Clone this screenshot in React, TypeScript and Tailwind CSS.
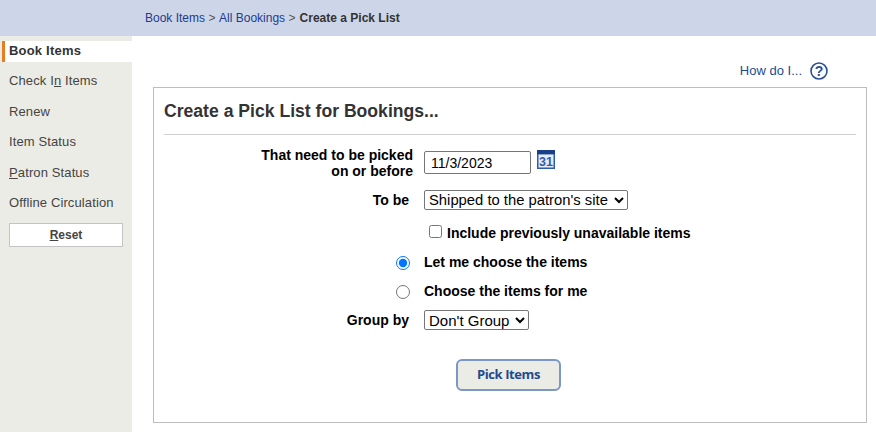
import React from "react";

const font = { fontFamily: '"Liberation Sans", Arial, sans-serif' };

function NavItem({ children, active }: { children: React.ReactNode; active?: boolean }) {
  return (
    <div className={active
      ? "h-[21px] ml-[2px] pl-[4px] border-l-[3px] border-[#e87c1e] bg-white flex items-center text-[13px] font-bold tracking-[0.2px] text-[#333] leading-none mb-[7px]"
      : "h-[23px] pl-[9px] flex items-center text-[13px] tracking-[0.12px] text-[#444] leading-none mb-[7.4px]"}>
      <span className={active ? "-mt-[2px]" : ""}>{children}</span>
    </div>
  );
}

function CalendarIcon() {
  return (
    <svg width="18" height="19" viewBox="0 0 18 19" className="block">
      <rect x="0" y="0" width="18" height="19" fill="#2f5ca8" />
      <rect x="0" y="0" width="18" height="4" fill="#1b3f86" />
      <rect x="1.5" y="4.5" width="15" height="13" fill="#e6edf8" />
      <text x="9" y="16" textAnchor="middle" fontSize="12.5" fontWeight="700" fill="#2f5ca8" fontFamily="Liberation Sans">31</text>
    </svg>
  );
}

function HelpIcon() {
  return (
    <svg width="18" height="18" viewBox="0 0 18 18" className="block">
      <circle cx="9" cy="9" r="8" fill="white" stroke="#2a4f96" strokeWidth="1.6" />
      <text x="9" y="14" textAnchor="middle" fontSize="14" fontWeight="700" fill="#2a4f96" fontFamily="Liberation Sans">?</text>
    </svg>
  );
}

export default function App() {
  return (
    <div className="w-[876px] h-[432px] overflow-hidden bg-white flex flex-col" style={font}>
      <div className="h-[36px] shrink-0 bg-[#cdd6e8] pl-[145px] flex items-center text-[12px] text-[#555]">
        <a className="text-[#1f3a8f]">Book Items</a>
        <span className="mx-[3.5px]">&gt;</span>
        <a className="text-[#1f3a8f]">All Bookings</a>
        <span className="mx-[3.5px] mr-[4px]">&gt;</span>
        <span className="font-bold text-[#333]">Create a Pick List</span>
      </div>
      <div className="flex flex-1 min-h-0">
        <div className="w-[132px] shrink-0 bg-[#ecece6] pt-[5px]">
          <NavItem active>Book Items</NavItem>
          <NavItem>Check I<u>n</u> Items</NavItem>
          <div className="pt-[1px]"><NavItem>Renew</NavItem></div>
          <div className="-mt-[1px]"><NavItem>Item Status</NavItem></div>
          <div className="pt-[1px]"><NavItem><u>P</u>atron Status</NavItem></div>
          <div className="-mt-[1px]"><NavItem>Offline Circulation</NavItem></div>
          <div className="mt-[9.4px] ml-[9px] w-[114px] h-[24px] bg-white border border-[#c4c4c4] flex items-center justify-center text-[12px] font-bold text-[#444]">
            <span><u>R</u>eset</span>
          </div>
        </div>
        <div className="flex-1 pl-[21px] pr-[9px]">
          <div className="h-[51px] flex items-end justify-end pb-[7px] pr-[39px] gap-[8px]">
            <span className="text-[13px] leading-[18px] -mt-[1px] text-[#1f4a8f]">How do I...</span>
            <HelpIcon />
          </div>
          <div className="h-[336px] border border-[#bdbdbd] px-[10px]">
            <div className="h-[47px] border-b border-[#cfcfcf] flex items-center text-[17.6px] font-bold text-[#333]">
              Create a Pick List for Bookings...
            </div>
            <div className="text-[14px] font-bold text-black">
              <div className="flex mt-[16px] h-[24px]">
                <div className="w-[249px] text-right leading-[16px] -mt-[4px]">That need to be picked<br />on or before</div>
                <input readOnly value="11/3/2023" className="ml-[11px] w-[107px] h-[23px] border border-[#767676] rounded-[2px] px-[6px] text-[14px] font-normal text-black" />
                <div className="ml-[6px] -mt-[1px]"><CalendarIcon /></div>
              </div>
              <div className="flex items-center mt-[15px] h-[20px]">
                <div className="w-[245px] text-right">To be</div>
                <select className="ml-[15px] w-[204px] h-[20px] border border-[#767676] rounded-[2px] bg-white text-[14.8px] font-normal text-black appearance-auto" defaultValue="a">
                  <option value="a">Shipped to the patron's site</option>
                </select>
              </div>
              <div className="flex items-center mt-[15px] h-[16px] pl-[265px]">
                <input type="checkbox" className="w-[13px] h-[13px] -mt-[3px] appearance-auto m-0" />
                <span className="ml-[5px]">Include previously unavailable items</span>
              </div>
              <div className="flex items-center mt-[14px] h-[16px] pl-[232px]">
                <input type="radio" name="c" defaultChecked className="w-[14px] h-[14px] appearance-auto m-0" />
                <span className="ml-[14px] -mt-[1px]">Let me choose the items</span>
              </div>
              <div className="flex items-center mt-[13px] h-[16px] pl-[232px]">
                <input type="radio" name="c" className="w-[14px] h-[14px] appearance-auto m-0" />
                <span className="ml-[14px] -mt-[1px]">Choose the items for me</span>
              </div>
              <div className="flex items-center mt-[10px] h-[20px]">
                <div className="w-[245px] text-right">Group by</div>
                <select className="ml-[15px] w-[105px] h-[20px] border border-[#767676] rounded-[2px] bg-white text-[15px] font-normal text-black appearance-auto" defaultValue="a">
                  <option value="a">Don't Group</option>
                </select>
              </div>
              <div className="mt-[29px] ml-[292px] w-[105px] h-[32px] rounded-[6px] border-2 border-[#7c97c6] bg-[#ecece6] flex items-center justify-center">
                <span className="text-[13px] font-bold tracking-[-0.4px] text-[#234a8f]" style={{ fontFamily: '"Open Sans", sans-serif' }}>Pick Items</span>
              </div>
            </div>
          </div>
        </div>
      </div>
    </div>
  );
}
